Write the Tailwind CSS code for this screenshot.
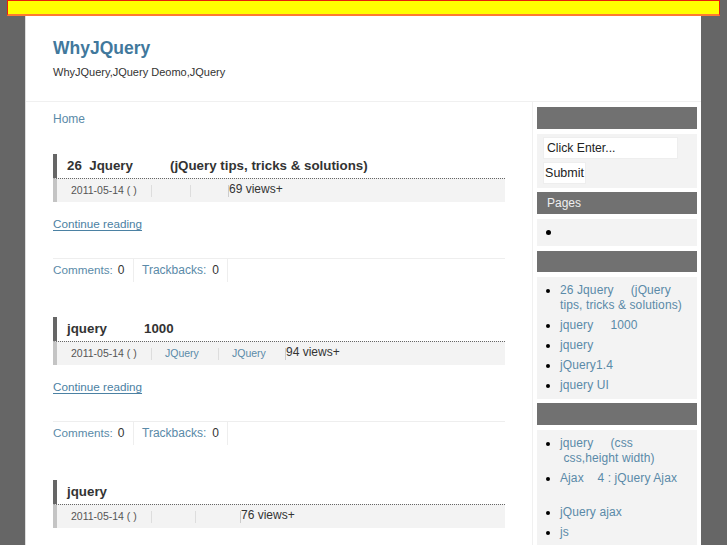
<!DOCTYPE html>
<html lang="en">
<head>
  <meta charset="UTF-8" />
  <title>WhyJQuery</title>
  <script src="https://cdn.jsdelivr.net/npm/@tailwindcss/browser@4"></script>
</head>
<body class="bg-[#666666] h-[545px] overflow-hidden font-['Liberation_Sans',sans-serif] text-[13px] text-[#333333]">
  <!-- Top notice bar -->
  <div class="absolute left-[7px] top-0 w-[713px] h-[16px] bg-[#ffff00] border border-[#e8200c] border-b-2 border-b-[#ff7a30]"></div>

  <div class="ml-[25px] w-[676px] h-[545px] bg-white border-l border-[#dddddd] overflow-hidden">
    <!-- Header -->
    <header class="h-[102px] pl-[27px] pt-[38px] border-b border-[#f0f0f0]">
      <h1 class="text-[17.5px] leading-[20px] font-bold text-[#41789c]">WhyJQuery</h1>
      <p class="mt-[7px] text-[11px] leading-[14px] text-[#333333]">WhyJQuery,JQuery Deomo,JQuery</p>
    </header>

    <div class="flex">
      <!-- Main column -->
      <main class="w-[507px] h-[443px] pl-[27px] border-r border-[#f0f0f0]">
        <a class="block mt-[10px] text-[12px] leading-[15px] text-[#5a8aa8]">Home</a>

        <article class="mt-[27px] w-[452px]">
          <h2 class="h-[24px] pl-[10px] border-l-[4px] border-[#666666] text-[13.33px] leading-[24px] font-bold text-[#333333] whitespace-pre">26  Jquery          (jQuery tips, tricks &amp; solutions)</h2>
          <div class="flex items-center h-[24px] pl-[14px] bg-[#f3f3f3] border-l-[4px] border-[#c4c4c4] border-t border-t-[#666666] [border-top-style:dotted] text-[11px]">
            <span class="w-[80px] h-[12px] text-[10.5px] leading-[10px] text-[#555555] whitespace-pre">2011-05-14 ( )</span>
            <span class="w-[39px] h-[12px] border-l border-[#dddddd]"></span>
            <span class="w-[38px] h-[12px] border-l border-[#dddddd]"></span>
            <span class="h-[12px] border-l border-[#cccccc] text-[12px] leading-[8px] text-[#333333]">69 views+</span>
          </div>
          <a class="block mt-[14px] text-[11.7px] leading-[15px] text-[#4b81a3] underline underline-offset-2">Continue reading</a>
          <div class="flex mt-[27px] h-[24px] border-t border-[#eeeeee] text-[12px] leading-[22px]">
            <span class="w-[81px] border-r border-[#eeeeee] text-[#333333]"><span class="text-[11.7px] text-[#5a8aa8]">Comments:</span><span class="ml-[5px]">0</span></span>
            <span class="w-[94px] pl-[8px] border-r border-[#eeeeee] text-[#333333]"><span class="text-[#5a8aa8]">Trackbacks:</span><span class="ml-[6px]">0</span></span>
          </div>
        </article>

        <article class="mt-[35px] w-[452px]">
          <h2 class="h-[24px] pl-[10px] border-l-[4px] border-[#666666] text-[13.33px] leading-[23px] font-bold text-[#333333] whitespace-pre">jquery          1000</h2>
          <div class="flex items-center h-[24px] pl-[14px] bg-[#f3f3f3] border-l-[4px] border-[#c4c4c4] border-t border-t-[#666666] [border-top-style:dotted] text-[11px]">
            <span class="w-[80px] h-[12px] text-[10.5px] leading-[10px] text-[#555555] whitespace-pre">2011-05-14 ( )</span>
            <span class="w-[67px] h-[12px] pl-[13px] border-l border-[#dddddd] text-[10.5px] leading-[10px] text-[#5a8aa8]">JQuery</span>
            <span class="w-[67px] h-[12px] pl-[13px] border-l border-[#dddddd] text-[10.5px] leading-[10px] text-[#5a8aa8]">JQuery</span>
            <span class="h-[12px] border-l border-[#cccccc] text-[12px] leading-[8px] text-[#333333]">94 views+</span>
          </div>
          <a class="block mt-[14px] text-[11.7px] leading-[15px] text-[#4b81a3] underline underline-offset-2">Continue reading</a>
          <div class="flex mt-[27px] h-[24px] border-t border-[#eeeeee] text-[12px] leading-[22px]">
            <span class="w-[81px] border-r border-[#eeeeee] text-[#333333]"><span class="text-[11.7px] text-[#5a8aa8]">Comments:</span><span class="ml-[5px]">0</span></span>
            <span class="w-[94px] pl-[8px] border-r border-[#eeeeee] text-[#333333]"><span class="text-[#5a8aa8]">Trackbacks:</span><span class="ml-[6px]">0</span></span>
          </div>
        </article>

        <article class="mt-[35px] w-[452px]">
          <h2 class="h-[24px] pl-[10px] border-l-[4px] border-[#666666] text-[13.33px] leading-[24px] font-bold text-[#333333]">jquery</h2>
          <div class="flex items-center h-[24px] pl-[14px] bg-[#f3f3f3] border-l-[4px] border-[#c4c4c4] border-t border-t-[#666666] [border-top-style:dotted] text-[11px]">
            <span class="w-[80px] h-[12px] text-[10.5px] leading-[10px] text-[#555555] whitespace-pre">2011-05-14 ( )</span>
            <span class="w-[44px] h-[12px] border-l border-[#dddddd]"></span>
            <span class="w-[45px] h-[12px] border-l border-[#dddddd]"></span>
            <span class="h-[12px] border-l border-[#cccccc] text-[12px] leading-[8px] text-[#333333]">76 views+</span>
          </div>
        </article>
      </main>

      <!-- Sidebar -->
      <aside class="w-[164px] pl-[4px] pt-[5px]">
        <div class="h-[22px] bg-[#717171]"></div>
        <div class="mt-[5px] h-[54px] bg-[#f3f3f3] pl-[6px] pt-[3px]">
          <div class="w-[135px] h-[22px] pl-[3px] bg-white border border-[#eeeeee] text-[12.2px] leading-[20px] text-[#222222]">Click Enter...</div>
          <div class="mt-[3px] w-[43px] h-[22px] bg-white border border-[#eeeeee] text-[12.5px] leading-[20px] text-center text-[#222222]">Submit</div>
        </div>
        <div class="mt-[4px] h-[22px] pl-[10px] bg-[#717171] text-[12px] leading-[22px] text-[#eeeeee]">Pages</div>
        <div class="mt-[5px] h-[27px] bg-[#f3f3f3] pl-[9px] pt-[11px]">
          <div class="w-[5px] h-[5px] rounded-full bg-black"></div>
        </div>
        <div class="mt-[5px] h-[21px] bg-[#717171]"></div>
        <ul class="mt-[5px] h-[122px] bg-[#f3f3f3] pt-[6px] pl-[23px] list-disc marker:text-black text-[12px] tracking-[0.1px] leading-[15px] text-[#5a8aa8]">
          <li class="mb-[5px] whitespace-pre">26 Jquery     (jQuery
tips, tricks &amp; solutions)</li>
          <li class="mb-[5px] whitespace-pre">jquery     1000</li>
          <li class="mb-[5px]">jquery</li>
          <li class="mb-[5px]">jQuery1.4</li>
          <li>jquery UI</li>
        </ul>
        <div class="mt-[4px] h-[22px] bg-[#717171]"></div>
        <ul class="mt-[5px] h-[120px] bg-[#f3f3f3] pt-[6px] pl-[23px] list-disc marker:text-black text-[12px] tracking-[0.1px] leading-[15px] text-[#5a8aa8]">
          <li class="mb-[5px] whitespace-pre">jquery     (css
 css,height width)</li>
          <li class="mb-[5px] h-[29px] whitespace-pre">Ajax    4 : jQuery Ajax</li>
          <li class="mb-[5px]">jQuery ajax</li>
          <li>js</li>
        </ul>
      </aside>
    </div>
  </div>
</body>
</html>
